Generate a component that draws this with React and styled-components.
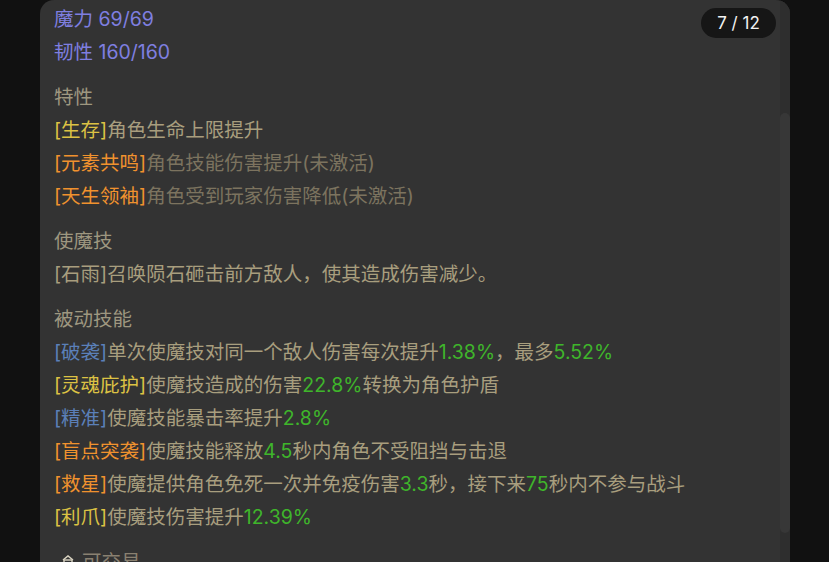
import React from "react";
import styled, { createGlobalStyle } from "styled-components";

const Global = createGlobalStyle`
  html, body { margin: 0; padding: 0; background: #111111; overflow: hidden; }
  body { font-family: Inter, "Noto Sans CJK SC", sans-serif; }
`;

const Page = styled.div`
  height: 562px;
  padding-left: 40px;
  display: flex;
  align-items: flex-start;
`;

const Card = styled.div`
  position: relative;
  width: 750px;
  height: 640px;
  background: #333333;
  border-radius: 14px 14px 0 0;
  display: flex;
  overflow: hidden;
`;

const Content = styled.div`
  flex: 1;
  padding: 2.5px 14px 0 14px;
  display: flex;
  flex-direction: column;
  gap: 12px;
  font-size: 19.5px;
  line-height: 33px;
  color: #a89e7e;
  white-space: nowrap;
`;

const Section = styled.div`
  display: flex;
  flex-direction: column;
`;

const Line = styled.div`
  color: ${(p) => p.$color || "#a89e7e"};
`;

const Tag = styled.span`
  color: ${(p) => p.$color};
`;

const Num = styled.span`
  color: #3fb52b;
`;

const Dim = styled.span`
  color: #7c735f;
`;

const Heading = styled.div`
  color: #9e9780;
`;

const Tradable = styled.div`
  display: flex;
  align-items: center;
  gap: 8px;
  padding-left: 8px;
  color: #8a8171;
`;

const Track = styled.div`
  width: 10px;
  background: #2e2e2e;
  display: flex;
  flex-direction: column;
`;

const Thumb = styled.div`
  margin-top: 113px;
  height: 420px;
  border-radius: 5px;
  background: #373737;
`;

const Badge = styled.div`
  position: absolute;
  top: 8px;
  right: 14px;
  width: 75px;
  height: 30px;
  border-radius: 15px;
  background: #161616;
  color: #f2f2f2;
  font-family: Inter, sans-serif;
  font-size: 17px;
  line-height: 30px;
  text-align: center;
`;

const ORANGE = "#f0922e";
const YELLOW = "#dcc244";
const BLUE = "#5b80b9";
const VIOLET = "#7f7fe0";

export default function App() {
  return (
    <>
      <Global />
      <Page>
        <Card>
          <Content>
            <Section>
              <Line $color={VIOLET}>魔力 69/69</Line>
              <Line $color={VIOLET}>韧性 160/160</Line>
            </Section>
            <Section>
              <Heading>特性</Heading>
              <Line>
                <Tag $color={YELLOW}>[生存]</Tag>角色生命上限提升
              </Line>
              <Line>
                <Tag $color={ORANGE}>[元素共鸣]</Tag>
                <Dim>角色技能伤害提升(未激活)</Dim>
              </Line>
              <Line>
                <Tag $color={ORANGE}>[天生领袖]</Tag>
                <Dim>角色受到玩家伤害降低(未激活)</Dim>
              </Line>
            </Section>
            <Section>
              <Heading>使魔技</Heading>
              <Line>[石雨]召唤陨石砸击前方敌人，使其造成伤害减少。</Line>
            </Section>
            <Section>
              <Heading>被动技能</Heading>
              <Line>
                <Tag $color={BLUE}>[破袭]</Tag>单次使魔技对同一个敌人伤害每次提升
                <Num>1.38%</Num>，最多<Num>5.52%</Num>
              </Line>
              <Line>
                <Tag $color={YELLOW}>[灵魂庇护]</Tag>使魔技造成的伤害
                <Num>22.8%</Num>转换为角色护盾
              </Line>
              <Line>
                <Tag $color={BLUE}>[精准]</Tag>使魔技能暴击率提升<Num>2.8%</Num>
              </Line>
              <Line>
                <Tag $color={ORANGE}>[盲点突袭]</Tag>使魔技能释放<Num>4.5</Num>
                秒内角色不受阻挡与击退
              </Line>
              <Line>
                <Tag $color={ORANGE}>[救星]</Tag>使魔提供角色免死一次并免疫伤害
                <Num>3.3</Num>秒，接下来<Num>75</Num>秒内不参与战斗
              </Line>
              <Line>
                <Tag $color={YELLOW}>[利爪]</Tag>使魔技伤害提升<Num>12.39%</Num>
              </Line>
            </Section>
            <Section>
              <Tradable>
                <svg width="12" height="14" viewBox="0 0 12 14" aria-hidden="true">
                  <path d="M1 5 L6 1 L11 5" fill="none" stroke="#d8d2c0" strokeWidth="1.6" />
                  <rect x="2" y="5" width="8" height="8" fill="none" stroke="#d8d2c0" strokeWidth="1.4" />
                </svg>
                <span>可交易</span>
              </Tradable>
            </Section>
          </Content>
          <Track>
            <Thumb />
          </Track>
          <Badge>7 / 12</Badge>
        </Card>
      </Page>
    </>
  );
}
